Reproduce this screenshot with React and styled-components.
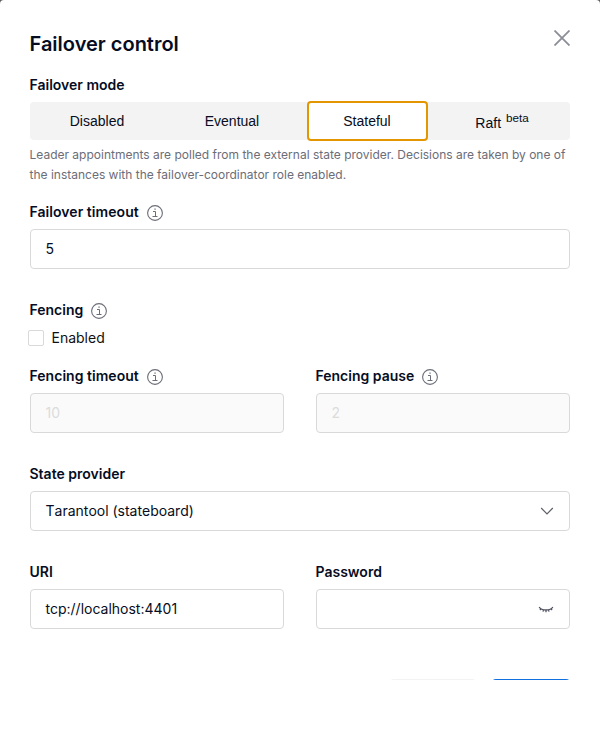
import React from "react";
import styled, { createGlobalStyle } from "styled-components";

const GlobalStyle = createGlobalStyle`
  * { box-sizing: border-box; }
  body { margin: 0; background: #fff; }
`;

const Backdrop = styled.div`
  height: 748px;
  overflow: hidden;
  background: linear-gradient(#5c5c62 0 8px, #fff 8px);
`;

const Modal = styled.form`
  display: flex;
  flex-direction: column;
  height: 748px;
  padding: 28px 30.5px 0 29.5px;
  background: #fff;
  border-radius: 4px;
  color: #060d22;
  font: 14px/22px Inter, sans-serif;
`;

const Header = styled.header`
  display: flex;
  justify-content: space-between;
  align-items: flex-start;
  height: 46px;
`;

const Title = styled.h2`
  margin: 0;
  font-size: 20px;
  line-height: 32px;
  font-weight: 600;
`;

const CloseButton = styled.button`
  display: flex;
  padding: 0;
  margin: 2px -0.5px 0 0;
  border: 0;
  background: none;
  color: #8b8d97;
`;

const Field = styled.div`
  display: flex;
  flex-direction: column;
  min-width: 0;
  height: ${(p) => p.$height}px;
`;

const Label = styled.label`
  display: flex;
  align-items: center;
  height: 22px;
  margin-bottom: 6px;
  font-weight: 600;
  letter-spacing: ${(p) => p.$tracking ?? 0}px;

  svg { margin: 2px 0 0 8px; }
`;

const Segments = styled.div`
  display: grid;
  grid-template-columns: repeat(4, 1fr);
  height: 38px;
  border-radius: 4px;
  background: #f3f3f3;
`;

const Segment = styled.button`
  height: ${(p) => (p.$active ? 40 : 38)}px;
  margin: ${(p) => (p.$active ? "-1px 7px" : "0 7px")};
  padding: 0;
  border: 2px solid ${(p) => (p.$active ? "#e39600" : "transparent")};
  border-radius: 4px;
  background: ${(p) => (p.$active ? "#fff" : "transparent")};
  color: #060d22;
  font: 14px/22px "Liberation Sans", sans-serif;
`;

const SegmentLabel = styled.span`
  display: block;
  margin-top: ${(p) => (p.$raised ? -2 : 0)}px;

  sup {
    margin-left: 1px;
    font-size: smaller;
  }
`;

const Hint = styled.p`
  margin: 5px 0 0;
  color: #6b6d78;
  font-size: 12px;
  line-height: 20px;
`;

const Columns = styled.div`
  display: grid;
  grid-template-columns: 1fr 1fr;
  gap: 32px;
`;

const InputBox = styled.div`
  display: flex;
  align-items: center;
  justify-content: space-between;
  height: 40px;
  padding: 0 15px;
  border: 1px solid #d9d9d9;
  border-radius: 4px;
  background: ${(p) => (p.$disabled ? "#fafafa" : "#fff")};
  color: ${(p) => (p.$disabled ? "#dcdcdc" : "#060d22")};
`;

const SelectBox = styled(InputBox)`
  font-kerning: none;
`;

const CheckRow = styled.label`
  display: flex;
  align-items: center;
  gap: 8px;
  height: 22px;
  margin-left: -2px;
  color: #101010;
`;

const CheckMark = styled.span`
  width: 16px;
  height: 16px;
  border: 1px solid #d9d9d9;
  border-radius: 2px;
`;

const Footer = styled.footer`
  display: flex;
  justify-content: flex-end;
  gap: 16px;
  height: 1px;
  margin-right: -0.5px;
  overflow: hidden;
`;

const FooterButton = styled.button`
  flex: none;
  width: ${(p) => p.$width}px;
  height: 32px;
  padding: 0;
  border: 0;
  border-radius: 4px;
  background: ${(p) => (p.$primary ? "#1070e0" : "#f3f3f3")};
`;

const InfoIcon = () => (
  <svg width="16" height="16" viewBox="0 0 16 16" fill="none" stroke="#6b6d78">
    <circle cx="8" cy="8" r="7.4" strokeWidth="1.1" />
    <path d="M6 6.5H8.5V11.5M5.5 11.5H10.5" />
    <path d="M7.4 4.2H8.7" strokeWidth="1.2" />
  </svg>
);

const CloseIcon = () => (
  <svg width="16" height="16" viewBox="0 0 16 16" fill="none" stroke="currentColor" strokeWidth="1.8">
    <path d="M.5.5l15 15M15.5.5l-15 15" />
  </svg>
);

const ChevronIcon = () => (
  <svg width="14" height="14" viewBox="0 0 14 14" fill="none" stroke="#5c5e66" strokeWidth="1.2">
    <path d="M1.2 4L7 10l5.8-6" />
  </svg>
);

const ClosedEyeIcon = () => (
  <svg width="16" height="14" viewBox="0 0 16 14" fill="none" stroke="#4f5160" strokeWidth="1.3">
    <path d="M1.2 5C3.5 9 12.5 9 14.8 5M3 6.6L2 8M5.5 7.7L5 9.6M8 8V10.3M10.5 7.7L11 9.6M13 6.6L14 8" />
  </svg>
);

export default function App() {
  return (
    <Backdrop>
      <GlobalStyle />
      <Modal>
        <Header>
          <Title>Failover control</Title>
          <CloseButton type="button" aria-label="Close"><CloseIcon /></CloseButton>
        </Header>
        <Field $height={127}>
          <Label>Failover mode</Label>
          <Segments>
            <Segment type="button"><SegmentLabel>Disabled</SegmentLabel></Segment>
            <Segment type="button"><SegmentLabel>Eventual</SegmentLabel></Segment>
            <Segment type="button" $active><SegmentLabel>Stateful</SegmentLabel></Segment>
            <Segment type="button"><SegmentLabel $raised>Raft <sup>beta</sup></SegmentLabel></Segment>
          </Segments>
          <Hint>
            Leader appointments are polled from the external state provider. Decisions are taken by one of
            the instances with the failover-coordinator role enabled.
          </Hint>
        </Field>
        <Field $height={98}>
          <Label $tracking={0.05}>Failover timeout <InfoIcon /></Label>
          <InputBox>5</InputBox>
        </Field>
        <Field $height={66}>
          <Label>Fencing <InfoIcon /></Label>
          <CheckRow><CheckMark />Enabled</CheckRow>
        </Field>
        <Columns>
          <Field $height={98}>
            <Label $tracking={0.03}>Fencing timeout <InfoIcon /></Label>
            <InputBox $disabled>10</InputBox>
          </Field>
          <Field $height={98}>
            <Label>Fencing pause <InfoIcon /></Label>
            <InputBox $disabled>2</InputBox>
          </Field>
        </Columns>
        <Field $height={98}>
          <Label>State provider</Label>
          <SelectBox>Tarantool (stateboard)<ChevronIcon /></SelectBox>
        </Field>
        <Columns>
          <Field $height={118}>
            <Label>URI</Label>
            <InputBox>tcp://localhost:4401</InputBox>
          </Field>
          <Field $height={118}>
            <Label>Password</Label>
            <InputBox><span /><ClosedEyeIcon /></InputBox>
          </Field>
        </Columns>
        <Footer>
          <FooterButton type="button" $width={86} aria-label="Cancel" />
          <FooterButton type="button" $width={78} $primary aria-label="Apply" />
        </Footer>
      </Modal>
    </Backdrop>
  );
}
